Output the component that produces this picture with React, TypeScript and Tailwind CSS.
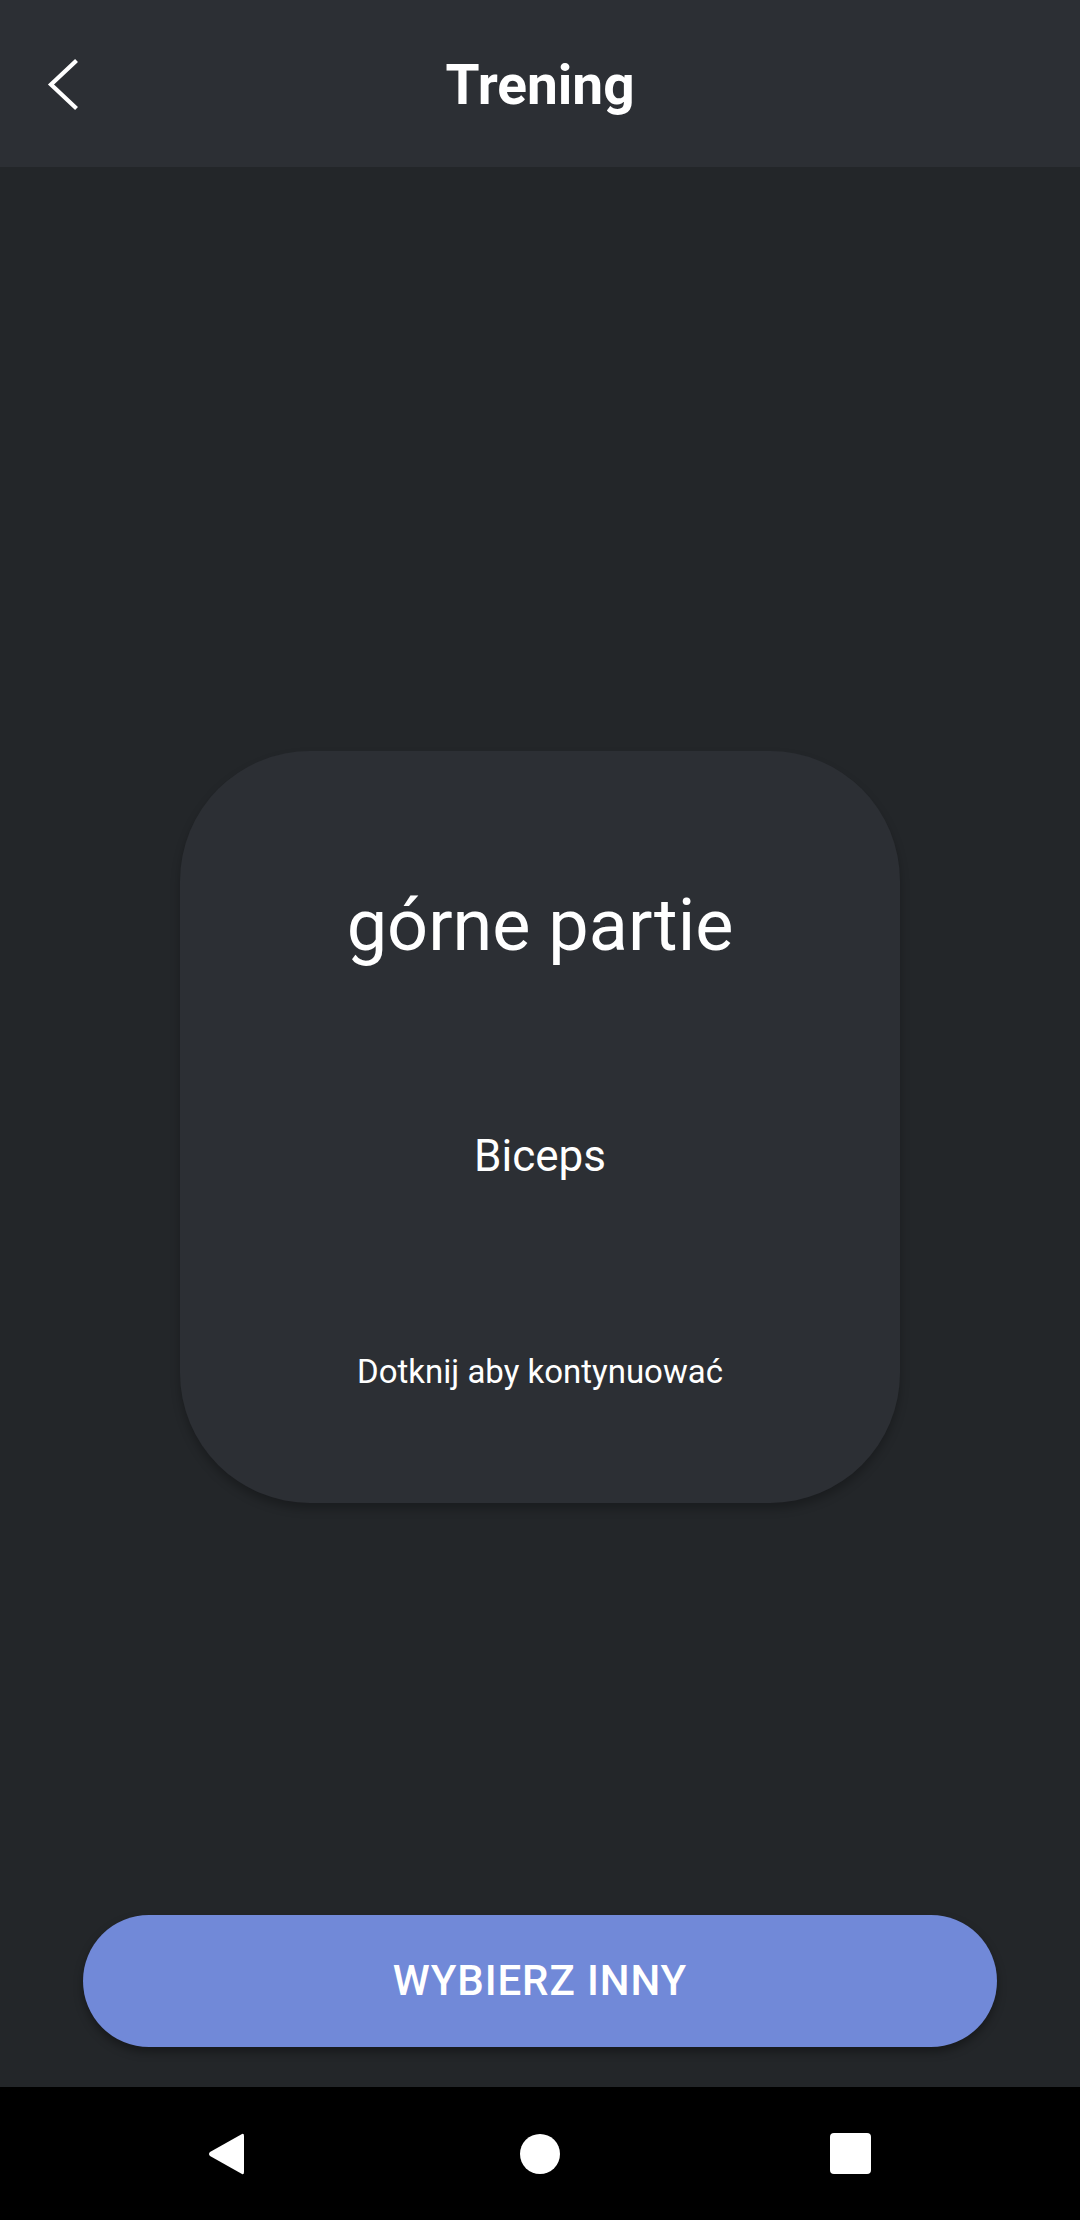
import React from "react";

const TrainingPage: React.FC = () => {
  return (
    <div
      className="flex flex-col w-[1080px] h-[2220px] bg-[#232629] text-white"
      style={{ fontFamily: "Roboto, 'Noto Sans', sans-serif" }}
    >
      {/* toolbar */}
      <header className="grid grid-cols-[1fr_auto_1fr] items-center h-[167px] bg-[#2c2f34] shrink-0">
        <div className="pl-[44px] flex items-center">
          <svg width="40" height="56" viewBox="0 0 40 56" fill="none">
            <path
              d="M31 6 L7 28.5 L31 51"
              stroke="white"
              strokeWidth="4.2"
              strokeLinecap="square"
              strokeLinejoin="miter"
            />
          </svg>
        </div>
        <h1 className="text-[55px] leading-none font-bold pt-[4px]">Trening</h1>
        <div />
      </header>

      {/* content */}
      <main className="flex-1 grid">
        <div className="col-start-1 row-start-1 self-center justify-self-center">
          <div className="w-[720px] rounded-[130px] bg-[#2c2f34] shadow-[0_6px_10px_rgba(0,0,0,0.25)] flex flex-col items-center pt-[139px] pb-[115px]">
            <p className="text-[72px] leading-none">górne partie</p>
            <p className="text-[44px] leading-none mt-[172px]">Biceps</p>
            <p className="text-[33px] leading-none mt-[177px]">Dotknij aby kontynuować</p>
          </div>
        </div>
        <div className="col-start-1 row-start-1 self-end px-[83px] pb-[40px]">
          <button className="w-full h-[132px] rounded-full bg-[#7189d8] shadow-[0_5px_10px_rgba(0,0,0,0.35)] flex items-center justify-center text-[42px] leading-none font-medium tracking-[0.9px]">
            WYBIERZ INNY
          </button>
        </div>
      </main>

      {/* system nav */}
      <nav className="h-[133px] bg-black flex items-center shrink-0">
        <div className="ml-[207px]">
          <svg width="38" height="46" viewBox="0 0 38 46">
            <path
              d="M35 3 Q37 2 37 5 L37 41 Q37 44 35 43 L3 25 Q1 23 3 21 Z"
              fill="white"
            />
          </svg>
        </div>
        <div className="ml-[275px] w-[40px] h-[40px] rounded-full bg-white" />
        <div className="ml-[270px] w-[41px] h-[41px] rounded-[4px] bg-white" />
      </nav>
    </div>
  );
};

export default function App() {
  return <TrainingPage />;
}
